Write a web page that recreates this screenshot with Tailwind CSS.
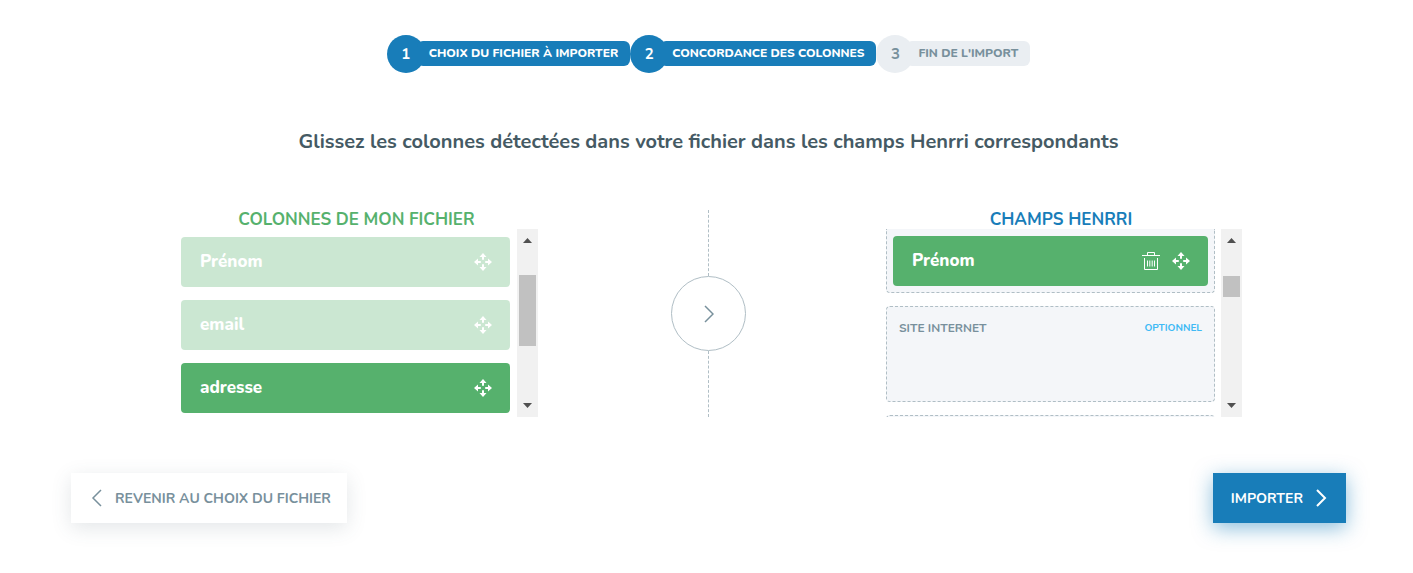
<!DOCTYPE html>
<html lang="fr">
<head>
    <meta charset="UTF-8">
    <meta name="viewport" content="width=device-width, initial-scale=1.0">
    <title>Import - Concordance des colonnes</title>
    <script src="https://cdn.jsdelivr.net/npm/@tailwindcss/browser@4"></script>
</head>
<body class="bg-white font-['Nunito','Open_Sans',sans-serif] text-[#78909c]">
    <!-- Icônes partagées -->
    <svg class="hidden">
        <symbol id="move" viewBox="0 0 18 18">
            <path fill="currentColor" d="M9 0l3.500 4H10v2.800H8V4H5.500zM9 18l-3.500-4H8v-2.800h2V14h2.500zM0 9l4-3.500V8h2.800v2H4v2.500zM18 9l-4 3.500V10h-2.800V8H14V5.500z"/>
        </symbol>
        <symbol id="trash" viewBox="0 0 18 18">
            <path fill="none" stroke="currentColor" d="M0 3.500h18M5.500 3.500v-3h7v3M2.500 6v11.500h13V6M5.500 8.500v6M7.800 8.500v6M10.200 8.500v6M12.500 8.500v6"/>
        </symbol>
    </svg>

    <main class="pt-[35px] pb-[50px] pl-[71px] pr-[67px]">
        <!-- Étapes -->
        <ol class="flex justify-center text-[12px] font-extrabold">
            <li class="flex items-center text-white">
                <span class="flex size-[38px] items-center justify-center rounded-full bg-[#187db9] text-[15px] font-bold">1</span>
                <span class="-ml-2 mb-px h-[25px] rounded-md bg-[#187db9] px-3 leading-[25px]">CHOIX DU FICHIER À IMPORTER</span>
            </li>
            <li class="flex items-center text-white">
                <span class="flex size-[38px] items-center justify-center rounded-full bg-[#187db9] text-[15px] font-bold">2</span>
                <span class="-ml-2 mb-px h-[25px] rounded-md bg-[#187db9] px-3 leading-[25px]">CONCORDANCE DES COLONNES</span>
            </li>
            <li class="flex items-center">
                <span class="flex size-[38px] items-center justify-center rounded-full bg-[#eaeef2] text-[15px] font-bold">3</span>
                <span class="-ml-2 mb-px h-[25px] rounded-md bg-[#eaeef2] px-3 leading-[25px]">FIN DE L'IMPORT</span>
            </li>
        </ol>

        <h1 class="mt-[54px] text-center text-[20px] leading-[30px] font-bold text-[#455a64]">Glissez les colonnes détectées dans votre fichier dans les champs Henrri correspondants</h1>

        <div class="mt-[53px] ml-[110px] mr-[104px] grid grid-cols-[357fr_348fr_356fr]">
            <!-- Colonnes du fichier -->
            <section>
                <h2 class="h-[19px] pr-[6px] text-center text-[17px] leading-[19px] font-bold text-[#56b16d]">COLONNES DE MON FICHIER</h2>
                <div class="flex h-[188px] gap-[7px] overflow-hidden">
                    <ul class="flex flex-1 flex-col gap-[13px] pt-2 text-[17px] font-extrabold text-white">
                        <li class="flex h-[50px] shrink-0 items-center justify-between rounded bg-[#56b16d] pl-[19px] pr-[18px] opacity-30">
                            Prénom
                            <svg class="size-[18px]"><use href="#move"/></svg>
                        </li>
                        <li class="flex h-[50px] shrink-0 items-center justify-between rounded bg-[#56b16d] pl-[19px] pr-[18px] opacity-30">
                            email
                            <svg class="size-[18px]"><use href="#move"/></svg>
                        </li>
                        <li class="flex h-[50px] shrink-0 items-center justify-between rounded bg-[#56b16d] pl-[19px] pr-[18px]">
                            adresse
                            <svg class="size-[18px]"><use href="#move"/></svg>
                        </li>
                    </ul>
                    <div class="flex w-[21px] flex-col items-center bg-[#f1f1f1] py-[9px]" aria-hidden="true">
                        <svg class="h-[5px] w-[9px] shrink-0" viewBox="0 0 9 5"><path fill="#505050" d="M0 5l4.500-5L9 5z"/></svg>
                        <div class="mt-8 h-[71px] w-[17px] bg-[#c1c1c1]"></div>
                        <svg class="mt-auto h-[5px] w-[9px] shrink-0" viewBox="0 0 9 5"><path fill="#505050" d="M0 0h9L4.500 5z"/></svg>
                    </div>
                </div>
            </section>

            <!-- Séparateur -->
            <div class="flex flex-col items-center pr-[7px]">
                <div class="w-px flex-1 border-l border-dashed border-[#b0bec5]"></div>
                <div class="flex size-[75px] items-center justify-center rounded-full border border-[#b0bec5]">
                    <svg class="h-[18px] w-[10px]" viewBox="0 0 10 18" fill="none" stroke="#78909c" stroke-width="1.500"><path d="M1 1l8 8-8 8"/></svg>
                </div>
                <div class="w-px flex-1 border-l border-dashed border-[#b0bec5]"></div>
            </div>

            <!-- Champs Henrri -->
            <section>
                <h2 class="h-[19px] pr-[6px] text-center text-[17px] leading-[19px] font-bold text-[#187db9]">CHAMPS HENRRI</h2>
                <div class="flex h-[188px] gap-[6px] overflow-hidden">
                    <ul class="flex flex-1 flex-col gap-[13px]">
                        <li class="h-16 shrink-0 rounded-b border border-t-0 border-dashed border-[#b0bec5] bg-[#f4f6f9] px-[6px] pt-[7px]">
                            <div class="flex h-[50px] items-center rounded bg-[#56b16d] pl-[19px] pr-[18px] text-[17px] font-extrabold text-white">
                                Prénom
                                <button type="button" class="ml-auto" aria-label="Supprimer"><svg class="size-[18px]"><use href="#trash"/></svg></button>
                                <svg class="ml-3 size-[18px]"><use href="#move"/></svg>
                            </div>
                        </li>
                        <li class="flex h-24 shrink-0 items-start justify-between rounded border border-dashed border-[#b0bec5] bg-[#f4f6f9] px-3 pt-[11px]">
                            <span class="text-[12px] leading-5 font-bold">SITE INTERNET</span>
                            <span class="text-[10px] leading-5 font-bold text-[#40baf5]">OPTIONNEL</span>
                        </li>
                        <li class="h-24 shrink-0 rounded border border-dashed border-[#b0bec5] bg-[#f4f6f9]"></li>
                    </ul>
                    <div class="flex w-[21px] flex-col items-center bg-[#f1f1f1] py-[9px]" aria-hidden="true">
                        <svg class="h-[5px] w-[9px] shrink-0" viewBox="0 0 9 5"><path fill="#505050" d="M0 5l4.500-5L9 5z"/></svg>
                        <div class="mt-[33px] h-[21px] w-[17px] bg-[#c1c1c1]"></div>
                        <svg class="mt-auto h-[5px] w-[9px] shrink-0" viewBox="0 0 9 5"><path fill="#505050" d="M0 0h9L4.500 5z"/></svg>
                    </div>
                </div>
            </section>
        </div>

        <!-- Navigation -->
        <div class="mt-14 flex justify-between text-[14px] font-bold">
            <button type="button" class="flex h-[50px] items-center gap-[13px] bg-white pl-5 pr-4 shadow-[0_5px_20px_rgba(69,90,100,0.15)]">
                <svg class="h-[18px] w-[11px]" viewBox="0 0 11 18" fill="none" stroke="currentColor" stroke-width="1.500"><path d="M10 1L2 9l8 8"/></svg>
                REVENIR AU CHOIX DU FICHIER
            </button>
            <button type="button" class="flex h-[50px] items-center gap-[13px] bg-[#187db9] pl-[18px] pr-[19px] text-white shadow-[0_5px_20px_rgba(24,125,185,0.5)]">
                IMPORTER
                <svg class="h-[18px] w-[11px]" viewBox="0 0 11 18" fill="none" stroke="currentColor" stroke-width="2"><path d="M1 1l8 8-8 8"/></svg>
            </button>
        </div>
    </main>
</body>
</html>
